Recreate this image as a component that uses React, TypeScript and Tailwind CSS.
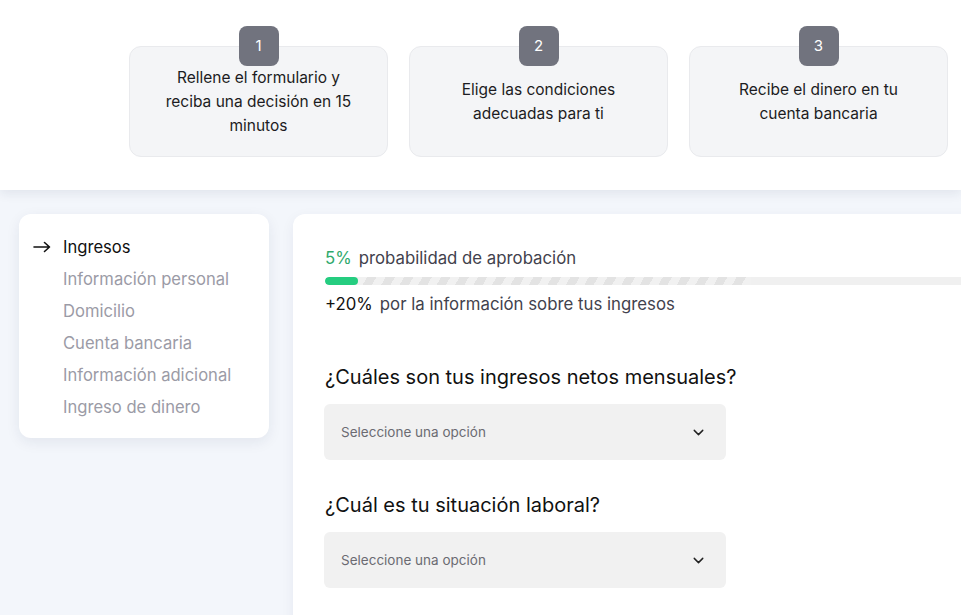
import React from 'react';

const steps = [
  { n: '1', text: 'Rellene el formulario y reciba una decisión en 15 minutos' },
  { n: '2', text: 'Elige las condiciones adecuadas para ti' },
  { n: '3', text: 'Recibe el dinero en tu cuenta bancaria' },
];

const navItems = [
  'Ingresos',
  'Información personal',
  'Domicilio',
  'Cuenta bancaria',
  'Información adicional',
  'Ingreso de dinero',
];

const Chevron = () => (
  <svg width="17" height="17" viewBox="0 0 24 24" fill="none" stroke="#222" strokeWidth="2" strokeLinecap="round" strokeLinejoin="round">
    <path d="M6 9l6 6 6-6" />
  </svg>
);

const Arrow = () => (
  <svg width="18" height="12" viewBox="0 0 18 12" fill="none" stroke="#111" strokeWidth="1.6" strokeLinecap="round" strokeLinejoin="round">
    <path d="M1 6h15.5M11.5 1.5L16.5 6l-5 4.5" />
  </svg>
);

const SelectBox: React.FC = () => (
  <div className="w-[402px] h-14 bg-[#f1f1f1] rounded-md flex items-center justify-between pl-[17px] pr-[19px]">
    <span className="text-[13.5px] text-[#6b6b72]">Seleccione una opción</span>
    <Chevron />
  </div>
);

export default function App() {
  return (
    <div className="w-[961px] h-[615px] overflow-hidden bg-[#f3f6fb] font-['Inter',sans-serif]">
      {/* Steps header */}
      <div className="bg-white h-[190px] shadow-[0_4px_10px_rgba(30,40,80,0.08)] relative z-10 flex gap-[21px] pl-[129px] pt-[46px]">
        {steps.map(s => (
          <div key={s.n} className="relative w-[259px] h-[111px] bg-[#f4f5f7] border border-[#e9eaed] rounded-xl flex items-center justify-center px-7">
            <div className="absolute -top-[21px] left-1/2 -translate-x-1/2 w-10 h-10 rounded-lg bg-[#71737e] text-white text-[15px] flex items-center justify-center">
              {s.n}
            </div>
            <p className="text-[15.5px] leading-6 text-[#1c1c22] text-center">{s.text}</p>
          </div>
        ))}
      </div>

      <div className="flex gap-[24px] pl-[19px] pt-[24px]">
        {/* Sidebar */}
        <div className="w-[250px] h-[224px] shrink-0 bg-white rounded-xl shadow-[0_4px_14px_rgba(30,40,80,0.08)] pt-[17px]">
          {navItems.map((item, i) => (
            <div key={item} className="flex items-center h-8 text-[16.6px]">
              <span className="w-[44px] pl-[14px] flex items-center">{i === 0 ? <Arrow /> : null}</span>
              <span className={i === 0 ? 'text-[#111]' : 'text-[#9b9ba6]'}>{item}</span>
            </div>
          ))}
        </div>

        {/* Main panel */}
        <div className="flex-1 min-w-[700px] h-[420px] bg-white rounded-tl-xl shadow-[0_4px_14px_rgba(30,40,80,0.06)] pl-[32px] pt-[32px]">
          <div className="text-[16.8px] text-[#42424d]">
            <span className="text-[#2fa96c]">5%</span>
            <span className="ml-[7px]">probabilidad de aprobación</span>
          </div>
          <div className="mt-[6px] h-2 w-[700px] rounded-full bg-[#f0f0f0] flex overflow-hidden">
            <div className="w-[33px] h-full bg-[#25cd80] rounded-full" />
            <div className="w-[393px] h-full bg-[repeating-linear-gradient(120deg,#f1f1f1_0px,#f1f1f1_8px,#e3e3e3_8px,#e3e3e3_16px)]" />
          </div>
          <div className="mt-[7px] text-[16.8px] text-[#42424d]">
            <span className="text-[#111]">+20%</span>
            <span className="ml-[7px]">por la información sobre tus ingresos</span>
          </div>

          <h2 className="mt-[45px] text-[20px] text-[#111]">¿Cuáles son tus ingresos netos mensuales?</h2>
          <div className="mt-[12px] -ml-px">
            <SelectBox />
          </div>

          <h2 className="mt-[30px] text-[20px] text-[#111]">¿Cuál es tu situación laboral?</h2>
          <div className="mt-[12px] -ml-px">
            <SelectBox />
          </div>
        </div>
      </div>
    </div>
  );
}
